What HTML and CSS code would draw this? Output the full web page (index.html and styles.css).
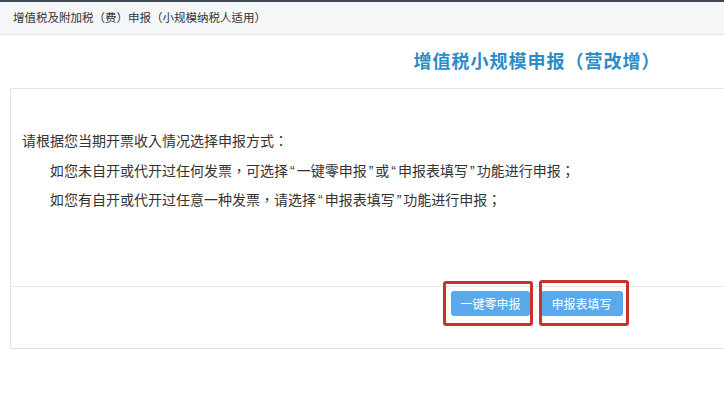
FILE: index.html
```html
<!DOCTYPE html>
<html lang="zh-TW">
<head>
<meta charset="utf-8">
<title>增值税小规模申报</title>
<link rel="stylesheet" href="styles.css">
</head>
<body>
<div class="topline"></div>
<div class="crumb">增值税及附加税（费）申报（小规模纳税人适用）</div>
<div class="page">
  <h1 class="title">增值税小规模申报（营改增）</h1>
  <div class="card">
    <div class="card-body">
      <p class="lead">请根据您当期开票收入情况选择申报方式：</p>
      <p class="item">如您未自开或代开过任何发票，可选择<span class="q">“</span>一键零申报<span class="q">”</span>或<span class="q">“</span>申报表填写<span class="q">”</span>功能进行申报；</p>
      <p class="item">如您有自开或代开过任意一种发票，请选择<span class="q">“</span>申报表填写<span class="q">”</span>功能进行申报；</p>
    </div>
    <div class="card-foot">
      <span class="btn-wrap mark-a"><button class="btn">一键零申报</button></span>
      <span class="btn-wrap mark-b"><button class="btn">申报表填写</button></span>
    </div>
  </div>
</div>
</body>
</html>
```
FILE: styles.css
```css
html, body {
  margin: 0;
  padding: 0;
  overflow: hidden;
  background: #fff;
}
body {
  font-family: "Liberation Sans", "Noto Sans CJK TC", sans-serif;
  color: #333;
}
.topline {
  height: 2px;
  background: #3b4752;
}
.crumb {
  height: 32px;
  line-height: 32px;
  padding-left: 13px;
  font-size: 11.5px;
  color: #333;
  background: #f4f6f8;
  border-bottom: 1px solid #e4e6e8;
}
.page {
  width: 1074px;
}
.title {
  margin: 0;
  padding: 16px 0 15px;
  text-align: center;
  font-size: 18px;
  line-height: 22px;
  font-weight: bold;
  letter-spacing: 1px;
  color: #2b8cc8;
}
.card {
  margin: 0 10px;
  border: 1px solid #e2e2e2;
}
.card-body {
  height: 159px;
  padding: 38px 11px 0;
  border-bottom: 1px solid #e6e6e6;
  font-size: 14px;
  line-height: 29.5px;
}
.card-body p {
  margin: 0;
}
.item {
  text-indent: 2em;
}
.q {
  margin: 0 2px;
}
.card-foot {
  height: 57px;
  padding-top: 4px;
  display: flex;
  justify-content: center;
  align-items: flex-start;
  gap: 11px;
}
.btn-wrap {
  position: relative;
  display: block;
}
.btn {
  display: block;
  height: 25px;
  padding: 0 9px;
  border: 0;
  border-radius: 3px;
  background: #59aaec;
  color: #fff;
  font-family: "Noto Sans CJK SC", sans-serif;
  font-size: 12px;
  line-height: 25px;
}
.mark-b .btn {
  padding: 0 11px;
}
.btn-wrap::after {
  content: "";
  position: absolute;
  border: 3px solid #c8322b;
  border-radius: 3px;
}
.mark-a::after {
  left: -8px;
  right: -3px;
  top: -10px;
  bottom: -10px;
}
.mark-b::after {
  left: -2px;
  right: -6px;
  top: -11px;
  bottom: -10px;
}
```
